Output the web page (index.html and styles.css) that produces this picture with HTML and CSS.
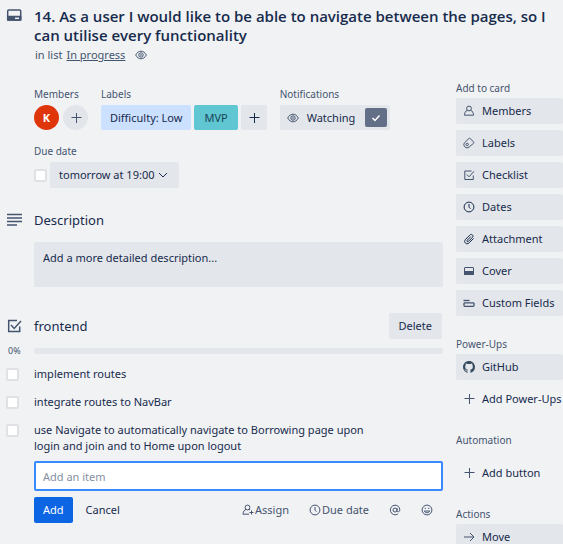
FILE: index.html
```html
<!DOCTYPE html>
<html lang="en">
<head>
<meta charset="utf-8">
<meta name="viewport" content="width=device-width, initial-scale=1">
<title>Card details</title>
<link rel="stylesheet" href="styles.css">
</head>
<body>
<svg class="sprite" aria-hidden="true">
  <symbol id="eye" viewBox="0 0 12 12"><path d="M.7 6C2 3.500 3.800 2.200 6 2.200S10 3.500 11.300 6C10 8.500 8.200 9.800 6 9.800S2 8.500.7 6Z"/><circle cx="6" cy="6" r="2.200"/><circle cx="6" cy="6" r=".4"/></symbol>
  <symbol id="plus" viewBox="0 0 12 12"><path d="M6.500 1v10M1.500 5.500h10"/></symbol>
  <symbol id="clock" viewBox="0 0 12 12"><circle cx="6" cy="6" r="4.900"/><path d="M6 3v3.200l1.500 1.500"/></symbol>
  <symbol id="person" viewBox="0 0 12 12"><circle cx="6" cy="3.500" r="2.400"/><path d="M4.300 5.200C2.500 6.200 1.600 7.500 1.500 10.200h9C10.400 7.500 9.500 6.200 7.700 5.200"/></symbol>
  <symbol id="check" viewBox="0 0 12 12"><path d="M8.500 2H1.800v8.500h8.500V6.500"/><path d="M3.800 5.500 6 7.800l5-5.500"/></symbol>
</svg>
<div class="card">
  <header class="card-header">
    <svg class="icon section-icon" viewBox="0 0 16 16"><rect x="1.700" y="3" width="13" height="10" rx="1"/><path class="solid" d="M1.700 9.500h13V13h-13z"/><path class="knockout" d="M9 11.300h4"/></svg>
    <div>
      <h1>14. As a user I would like to be able to navigate between the pages, so I can utilise every functionality</h1>
      <p class="in-list">in list <a href="#list">In progress</a> <svg class="icon small"><use href="#eye"/></svg></p>
    </div>
  </header>

  <main class="main">
    <div class="details">
      <section>
        <h3>Members</h3>
        <div class="row">
          <button class="avatar">K</button>
          <button class="avatar add" aria-label="Add member"><svg class="icon small"><use href="#plus"/></svg></button>
        </div>
      </section>
      <section>
        <h3>Labels</h3>
        <div class="row">
          <button class="tag difficulty">Difficulty: Low</button>
          <button class="tag mvp">MVP</button>
          <button class="tag add-label" aria-label="Add label"><svg class="icon small"><use href="#plus"/></svg></button>
        </div>
      </section>
      <section class="notifications">
        <h3>Notifications</h3>
        <button class="tag watching"><svg class="icon small"><use href="#eye"/></svg>Watching<span class="watch-mark"><svg class="icon" viewBox="0 0 12 12"><path d="m2.500 6 2.500 2.500 4.500-5"/></svg></span></button>
      </section>
    </div>

    <section class="due">
      <h3>Due date</h3>
      <div class="row">
        <input type="checkbox" aria-label="Mark due date complete">
        <button class="button due-button">tomorrow at 19:00<svg class="icon small" viewBox="0 0 12 12"><path d="m2 4 4 4 4-4"/></svg></button>
      </div>
    </section>

    <section class="description">
      <div class="section-title">
        <svg class="icon section-icon" viewBox="0 0 16 16"><path d="M1 2.500h15M1 6h15M1 9.500h15M1 13h10"/></svg>
        <h2>Description</h2>
      </div>
      <button class="description-box">Add a more detailed description...</button>
    </section>

    <section>
      <div class="section-title checklist-title">
        <svg class="icon section-icon" viewBox="0 0 16 16"><path d="M11 2.500H2.700v11h11V8.500"/><path d="M5 7l3.200 3.500L15 3"/></svg>
        <h2>frontend</h2>
        <button class="button">Delete</button>
      </div>
      <div class="progress"><span>0%</span><div class="track"></div></div>
      <ul class="items">
        <li><input type="checkbox" id="i1"><label for="i1">implement routes</label></li>
        <li><input type="checkbox" id="i2"><label for="i2">integrate routes to NavBar</label></li>
        <li><input type="checkbox" id="i3"><label for="i3">use Navigate to automatically navigate to Borrowing page upon login and join and to Home upon logout</label></li>
      </ul>
      <form class="new-item">
        <input type="text" placeholder="Add an item" aria-label="Add an item" autofocus>
        <div class="form-row">
          <button type="button" class="button primary">Add</button>
          <button type="button" class="plain">Cancel</button>
          <div class="tools">
            <button type="button" class="plain"><svg class="icon small" viewBox="0 0 12 12"><circle cx="5.500" cy="3.500" r="2.400"/><path d="M4 5.300C2.200 6.200 1.200 7.500 1 10.200h6M7 5.300l1 .7M9.500 6.500v4M7.500 8.500h4"/></svg>Assign</button>
            <button type="button" class="plain"><svg class="icon small"><use href="#clock"/></svg>Due date</button>
            <button type="button" class="plain" aria-label="Mention"><svg class="icon small" viewBox="0 0 12 12"><circle cx="6" cy="6" r="2"/><path d="M8 4v2.500c0 2 2.800 1.800 2.800-.7C10.800 3 8.700 1.200 6 1.200A4.800 4.800 0 1 0 8.800 10"/></svg></button>
            <button type="button" class="plain" aria-label="Emoji"><svg class="icon small" viewBox="0 0 12 12"><circle cx="6" cy="6" r="4.900"/><path d="M3.300 7c.8 2.300 4.600 2.300 5.400 0ZM4.300 3.800v1.200M7.700 3.800v1.200"/></svg></button>
          </div>
        </div>
      </form>
    </section>
  </main>

  <aside class="sidebar">
    <section>
      <h3>Add to card</h3>
      <button class="button"><svg class="icon small"><use href="#person"/></svg>Members</button>
      <button class="button"><svg class="icon small" viewBox="0 0 12 12"><path d="M1.200 6.200 5.800 1.600c.4-.4 1-.4 1.400 0l3.400 3.200c.4.400.4 1 0 1.400L6.200 10c-1.400 1.200-3.200 1-4.200 0s-1.600-2.600-.8-3.800Z"/><circle cx="4.200" cy="7.500" r="1.200"/></svg>Labels</button>
      <button class="button"><svg class="icon small"><use href="#check"/></svg>Checklist</button>
      <button class="button"><svg class="icon small dark"><use href="#clock"/></svg>Dates</button>
      <button class="button"><svg class="icon small dark" viewBox="0 0 12 12"><path d="m10.500 5.500-4.300 4.300c-2.800 2.600-6.200-.7-3.600-3.500l4.200-4.200c2-1.800 4.200.5 2.500 2.400L5.500 8.300c-1.100 1-2.200-.1-1.200-1.200l3.500-3.500"/></svg>Attachment</button>
      <button class="button"><svg class="icon small" viewBox="0 0 12 12"><rect x="1.500" y="2.500" width="9" height="7" rx=".5"/><path class="solid" d="M1.500 6.500h9v3h-9z"/></svg>Cover</button>
      <button class="button"><svg class="icon small bold" viewBox="0 0 12 12"><path d="M.5 3.500h6"/><rect x="1" y="5.800" width="10" height="3.500" rx=".8"/></svg>Custom Fields</button>
    </section>
    <section>
      <h3>Power-Ups</h3>
      <button class="button"><svg class="icon small github" viewBox="0 0 16 16"><path d="M8 0C3.580 0 0 3.580 0 8c0 3.540 2.290 6.530 5.470 7.590.4.070.55-.17.55-.38 0-.19-.01-.82-.01-1.490-2.010.37-2.530-.49-2.690-.94-.09-.23-.48-.94-.82-1.130-.28-.15-.68-.52-.01-.53.63-.01 1.080.58 1.230.82.72 1.210 1.870.87 2.330.66.07-.52.28-.87.51-1.070-1.780-.2-3.640-.89-3.640-3.950 0-.87.31-1.590.82-2.150-.08-.2-.36-1.020.08-2.120 0 0 .67-.21 2.200.82a7.600 7.600 0 0 1 4 0c1.530-1.040 2.200-.82 2.200-.82.44 1.100.16 1.920.08 2.120.51.56.82 1.270.82 2.150 0 3.070-1.870 3.750-3.650 3.950.29.25.54.73.54 1.480 0 1.070-.01 1.930-.01 2.200 0 .21.15.46.55.38A8 8 0 0 0 16 8c0-4.420-3.580-8-8-8Z"/></svg>GitHub</button>
      <button class="button ghost"><svg class="icon small"><use href="#plus"/></svg>Add Power-Ups</button>
    </section>
    <section class="automation">
      <h3>Automation</h3>
      <button class="button ghost"><svg class="icon small"><use href="#plus"/></svg>Add button</button>
    </section>
    <section>
      <h3>Actions</h3>
      <button class="button"><svg class="icon small" viewBox="0 0 12 12"><path d="M1 6h10M7 2l4 4-4 4"/></svg>Move</button>
    </section>
  </aside>
</div>
</body>
</html>
```
FILE: styles.css
```css
* { box-sizing: border-box; }
html { background: #f1f2f4; overflow: hidden; }
body {
  margin: 0;
  color: #172b4d;
  font: 11px/16px "Noto Sans", "Open Sans", sans-serif;
}
h1, h2, h3, p, ul { margin: 0; padding: 0; }
button { border: 0; margin: 0; padding: 0; background: none; color: inherit; font: inherit; white-space: nowrap; cursor: pointer; }
.sprite { position: absolute; width: 0; height: 0; }

.icon { flex: none; fill: none; stroke: #44546f; stroke-width: 1; }
.icon .solid { fill: #44546f; }
.icon .knockout { stroke: #f1f2f4; }
.small { width: 12px; height: 12px; }
.dark { stroke: #172b4d; }
.bold { stroke-width: 1.300; }
.github { fill: #344b60; stroke: none; }
.section-icon { width: 16px; height: 16px; stroke-width: 1.500; }

.card {
  display: grid;
  grid-template-columns: minmax(0, 1fr) 107px;
  column-gap: 13px;
}
.card-header {
  grid-column: 1 / -1;
  display: grid;
  grid-template-columns: 16px 1fr;
  column-gap: 12px;
  padding: 7px 8px 0 6px;
}
h1 { font: 600 15px/19px "Open Sans", "Noto Sans", sans-serif; }
.in-list { display: flex; align-items: center; gap: 4px; margin-top: 2px; padding-left: 1px; color: #44546f; }
.in-list a { color: inherit; }
.in-list .icon { margin-left: 6px; }

.main { padding: 23px 0 0 34px; }
h3 { font-size: 10px; line-height: 16px; font-weight: 400; color: #44546f; }
.details { display: flex; gap: 13px; }
.row { display: flex; align-items: center; gap: 3px; }
.details h3, .due h3 { margin-bottom: 3px; }
.avatar {
  display: grid;
  place-items: center;
  width: 25px;
  height: 25px;
  border-radius: 50%;
  background: #de350b;
  color: #fff;
  font-weight: 700;
}
.avatar.add { margin-left: 1px; background: #e2e5ea; }
.tag { display: flex; align-items: center; height: 25px; padding: 0 9px; border-radius: 2px; background: #e3e6ea; }
.difficulty { background: #cce0ff; }
.mvp { padding: 0 10px; background: #60c6d2; color: #164555; }
.add-label { padding: 0 7px; }
.add-label .icon { stroke: #172b4d; }
.watching { gap: 8px; padding: 0 3px 0 7px; }
.watch-mark { display: grid; place-items: center; width: 22px; height: 19px; margin-left: 2px; border-radius: 2px; background: #626f86; }
.watch-mark .icon { width: 12px; height: 12px; stroke: #fff; stroke-width: 1.500; }

.button {
  display: flex;
  align-items: center;
  height: 26px;
  padding: 0 10px;
  border-radius: 2px;
  background: #e3e6ea;
}
input[type="checkbox"] {
  appearance: none;
  flex: none;
  width: 13px;
  height: 13px;
  margin: 0;
  border: 2px solid #dfe1e5;
  border-radius: 2px;
  background: #fff;
}
.due { margin-top: 13px; }
.due-button { gap: 2px; padding: 0 10px 0 9px; }
.due-button .icon { stroke: #172b4d; }

.section-title { display: flex; align-items: center; gap: 12px; margin-left: -28px; }
h2 { flex: 1; font-size: 13px; line-height: 20px; font-weight: 400; }
.description { margin-top: 22px; }
.description-box {
  display: block;
  width: 100%;
  height: 45px;
  margin-top: 12px;
  padding: 0 9px 14px;
  border-radius: 2px;
  background: #e3e6ea;
  text-align: left;
}
.checklist-title { margin-top: 26px; padding-right: 1px; }
.progress { display: flex; align-items: center; gap: 8px; margin: 4px 0 0 -26px; height: 16px; font-size: 9px; color: #44546f; }
.progress span { width: 18px; }
.track { flex: 1; height: 6px; border-radius: 3px; background: #e3e6ea; }
.items { list-style: none; margin-left: -28px; padding-top: 7px; }
.items li { display: flex; gap: 15px; margin-bottom: 12px; padding-right: 72px; }
.items li:last-child { margin-bottom: 7px; }
.items input[type="checkbox"] { margin-top: 2px; }

.new-item input {
  display: block;
  width: 100%;
  height: 30px;
  padding: 0 7px;
  border: 2px solid #388bff;
  border-radius: 2px;
  outline: 0;
  background: #fff;
  color: #172b4d;
  font: inherit;
}
.new-item input::placeholder { color: #8590a2; }
.form-row { display: flex; align-items: center; margin-top: 6px; }
.primary { margin-right: 13px; padding: 0 9px; background: #0c66e4; color: #fff; }
.tools { display: flex; gap: 20px; margin-left: auto; padding-right: 10px; color: #44546f; }
.tools button { display: flex; align-items: center; gap: 1px; }

.sidebar { padding-top: 17px; }
.sidebar section { margin-bottom: 20px; }
.sidebar h3 { margin-bottom: 2px; }
.sidebar .button { width: 100%; gap: 7px; margin-bottom: 6px; padding: 0 0 0 7px; }
.sidebar .button:last-child { margin-bottom: 0; }
.sidebar .ghost { background: none; }
.automation .button { margin-top: 12px; }
```
